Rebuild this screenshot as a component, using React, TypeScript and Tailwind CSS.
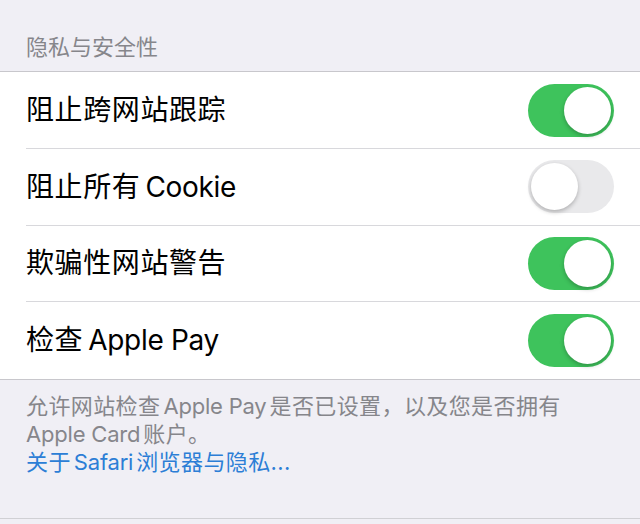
const font = { fontFamily: '"Inter", "Noto Sans CJK SC", sans-serif' }

const Toggle = ({ on }: { on: boolean }) => (
  <div
    className={`w-[86px] h-[53px] rounded-full p-[3px] flex items-center ${
      on ? 'bg-[#3ec35c] justify-end' : 'bg-[#e9e9eb] justify-start'
    }`}
  >
    <div className="w-[47px] h-[47px] rounded-full bg-white shadow-[0_2px_4px_rgba(0,0,0,0.25)]" />
  </div>
)

// latin bits get tighter spacing than the CJK ones
const Latin = ({ children }: { children: string }) => (
  <span className="tracking-[-0.3px] ml-[5px]">{children}</span>
)

const rows = [
  { label: '阻止跨网站跟踪', latin: '', on: true },
  { label: '阻止所有', latin: 'Cookie', on: false },
  { label: '欺骗性网站警告', latin: '', on: true },
  { label: '检查', latin: 'Apple Pay', on: true },
]

export default function App() {
  return (
    <div className="w-[640px] h-[524px] bg-[#f0eff5] overflow-hidden" style={font}>
      <div className="h-[71px] flex items-end pl-[26px] pb-[13px]">
        <span className="text-[22px] leading-none text-[#86868b]">隐私与安全性</span>
      </div>
      <div className="bg-white border-y border-[#c8c7cc]">
        {rows.map((row, idx) => (
          <div key={idx} className="pl-[26px]">
            <div
              className={`${idx === 0 ? 'h-[77px]' : 'h-[76.5px]'} flex items-center justify-between pr-[26px] ${
                idx < rows.length - 1 ? 'border-b border-[#d8d8dc]' : ''
              }`}
            >
              <span className="text-[28px] text-black tracking-[0.6px]">
                {row.label}
                {row.latin && <Latin>{row.latin}</Latin>}
              </span>
              <Toggle on={row.on} />
            </div>
          </div>
        ))}
      </div>
      <div className="h-[139px] border-b border-[#d0d0d4] pl-[26px] pt-[12px] text-[22px] leading-[28px] tracking-[0.4px]">
        <p className="text-[#86868b]">
          允许网站检查<span className="tracking-[-0.2px] mx-[3px]">Apple Pay</span>是否已设置，以及您是否拥有
          <br />
          <span className="tracking-[-0.2px] mr-[3px]">Apple Card</span>账户。
        </p>
        <p className="text-[#2c7ed6]">
          关于<span className="tracking-[-0.2px] mx-[3px]">Safari</span>浏览器与隐私...
        </p>
      </div>
    </div>
  )
}
